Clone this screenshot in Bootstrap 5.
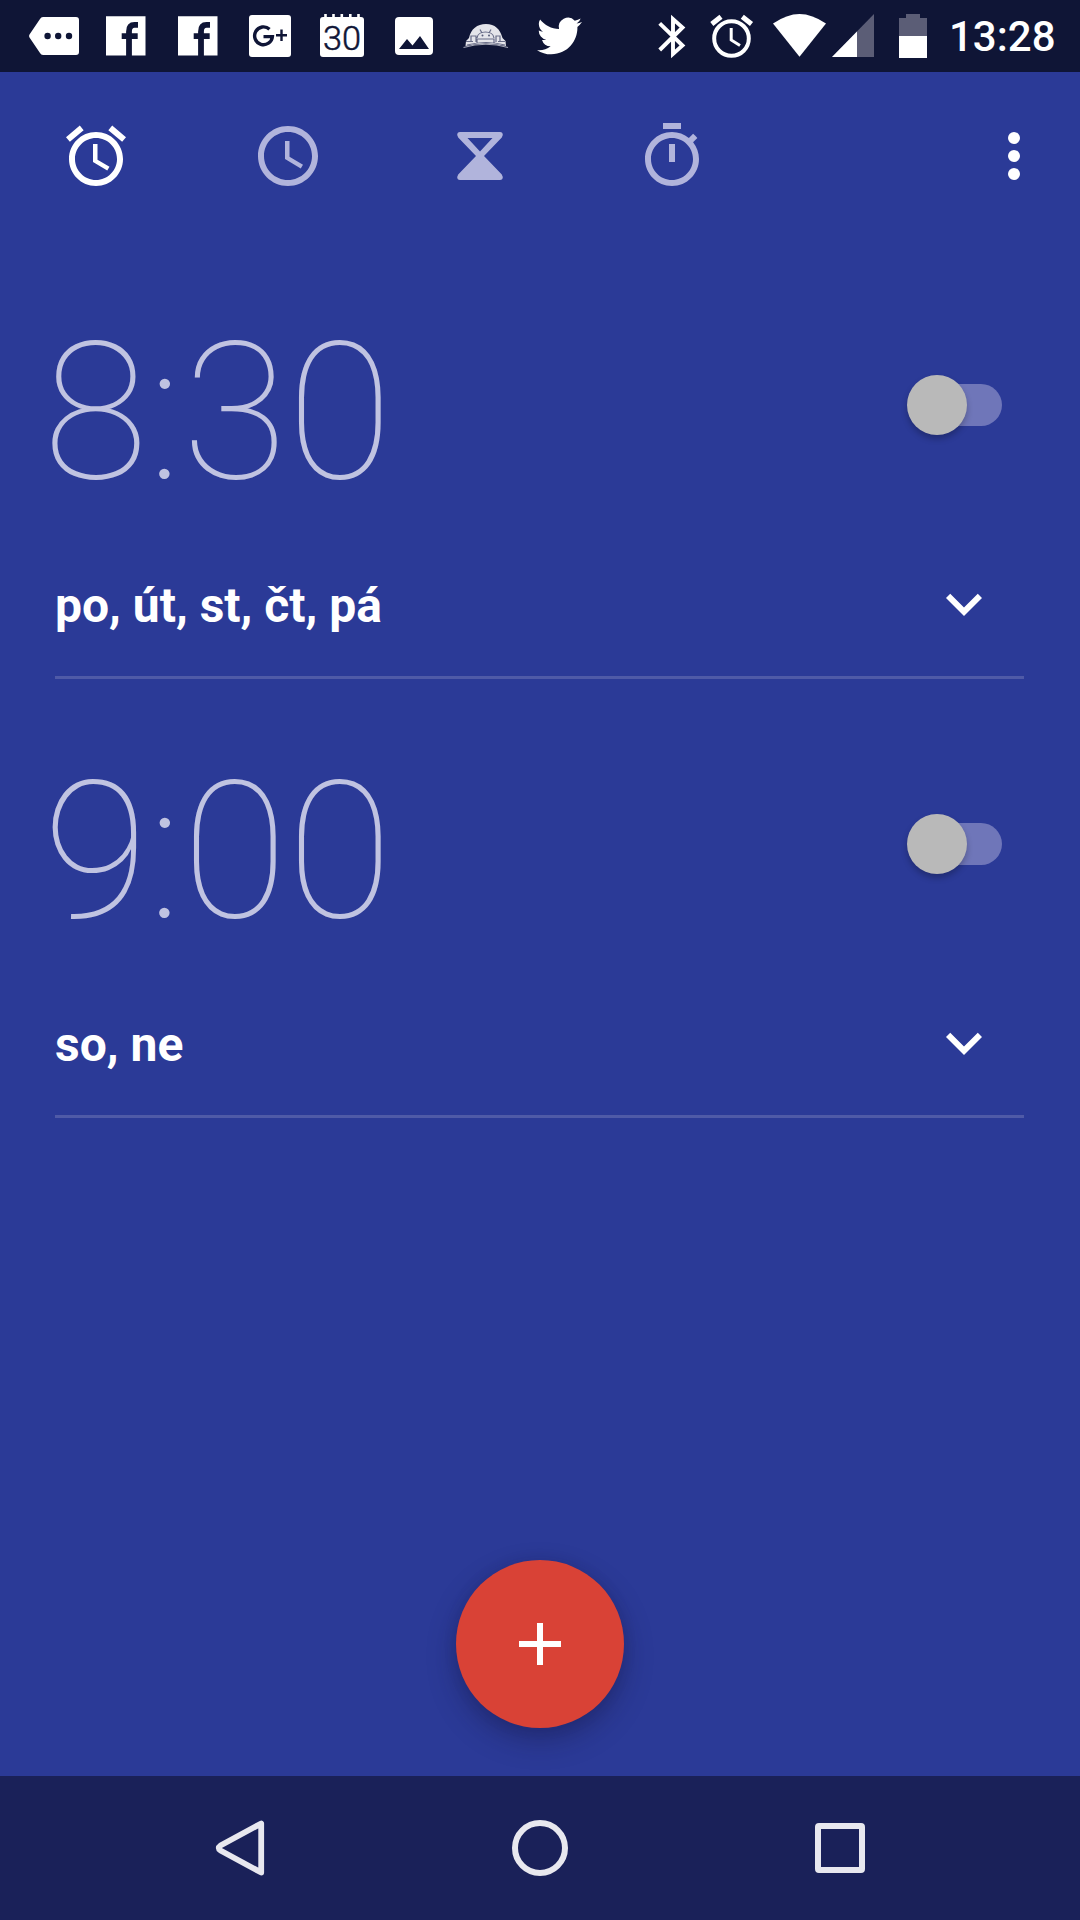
<!DOCTYPE html>
<html lang="cs">
<head>
<meta charset="utf-8">
<meta name="viewport" content="width=device-width, initial-scale=1">
<title>Hodiny</title>
<link href="https://cdn.jsdelivr.net/npm/bootstrap@5.3.0/dist/css/bootstrap.min.css" rel="stylesheet">
<style>
body{font-family:Roboto,"Noto Sans",sans-serif;background:#2b3a97;width:1080px;height:1920px;overflow:hidden}
svg{display:block;flex:none}
.statusbar{height:72px;background:#0f1536;padding-left:18px}
.slot svg{width:72px;height:72px}
.sysclock{font-size:42px;font-weight:500;line-height:72px;width:132px;padding-left:1px;padding-top:1px}
.tabs{height:168px;padding-right:30px}
.tab-item{width:192px;height:168px;color:#b1b4dc}
.tab-item.active{color:#fff}
.ico{width:72px;height:72px}
.alarm{height:439px;margin:0 56px 0 55px;border-bottom:3px solid #4f5aa7;padding-top:57px}
.alarm-time{font-size:192px;font-weight:100;line-height:225px;height:225px;color:#c0c3e1;margin:3px 0 0 -12px}
.alarm-top{height:225px}
.toggle{width:96px;height:61px;margin:77px 22px 0 0;padding:10px 0 0 12px}
.track{height:42px;border-radius:21px;background:#6f76b9}
.thumb{width:60px;height:60px;background:#b9b9b9;left:.5px;top:.5px;box-shadow:0 4px 6px rgba(0,0,0,.24)}
.days{font-size:48px;font-weight:700;line-height:72px;padding-top:4px}
.alarm-bottom{margin-top:46px;padding-right:24px;height:72px}
.fab{width:168px;height:168px;background:#d94236;box-shadow:0 12px 28px rgba(20,20,60,.38),0 0 14px rgba(20,20,60,.1);margin-bottom:48px}
.navkeys{height:144px;background:#1a2159}
.key{width:300px}
</style>
</head>
<body class="d-flex flex-column text-white">
<header class="statusbar d-flex flex-none justify-content-between">
  <div class="slot d-flex">
    <svg viewBox="18 0 72 72"><path fill="#fff" d="M43 17H76Q79 17 79 20V52Q79 55 76 55H43Q41 55 40 53L29.500 37.500Q28.500 36 29.500 34.500L40 19Q41 17 43 17Z"/><g fill="#0f1536"><circle cx="47.600" cy="36" r="3.200"/><circle cx="58.200" cy="36" r="3.200"/><circle cx="69" cy="36" r="3.200"/></g></svg>
    <svg viewBox="90 0 72 72"><path fill="#fff" d="M106 16.300h39.500v39.200H106z"/><path fill="none" stroke="#0f1536" stroke-width="5.800" d="M129 56V31.500Q129 24.900 134.500 24.900H138M121.700 36.200H137.700"/></svg>
    <svg viewBox="90 0 72 72"><path fill="#fff" d="M106 16.300h39.500v39.200H106z"/><path fill="none" stroke="#0f1536" stroke-width="5.800" d="M129 56V31.500Q129 24.900 134.500 24.900H138M121.700 36.200H137.700"/></svg>
    <svg viewBox="234 0 72 72"><rect x="249" y="15" width="42" height="42" rx="3" fill="#fff"/><path fill="none" stroke="#0f1536" stroke-width="3.400" d="M269.500 29.200A8.900 8.900 0 1 0 272.400 36.600H263.500"/><path fill="none" stroke="#0f1536" stroke-width="2.400" d="M276 35.200h11M281.500 29.500V41"/></svg>
    <svg viewBox="306 0 72 72"><path fill="#fff" d="M320 20q0-3 3-3h38q3 0 3 3v34q0 3-3 3h-38q-3 0-3-3z"/><path stroke="#fff" stroke-width="2.600" d="M325.500 14v5M333.500 14v5M341.800 14v5M350.300 14v5M358.500 14v5"/><text x="323" y="50" fill="#0f1536" stroke="#0f1536" stroke-width=".5" font-family="Roboto" font-size="34" font-weight="300" textLength="38" lengthAdjust="spacingAndGlyphs">30</text></svg>
    <svg viewBox="378 0 72 72"><rect x="395" y="17" width="38" height="38" rx="4" fill="#fff"/><path fill="#0f1536" d="M399 49L407 39L412.500 45.500L420 36L429 49Z"/></svg>
    <svg viewBox="450 0 72 72"><path fill="#e4e4ea" d="M465.500 46L466 41L469 38C471 29 477 24 486 24S500 29 502.500 38L505.500 41L506 46Q486 41 465.500 46Z"/><path fill="none" stroke="#a5a7b8" stroke-width="1.200" d="M463.500 47.500Q486 41 508 47.500"/><g fill="none" stroke="#686c88" stroke-width="1.200"><path d="M467 45Q486 40 505 45M477 43V39H494V43M477 38C478 30 493 30 494 38M480 29.500L482 33M491 29.500L489 33M471 42V36H476V42M496 42V36H500V42M466 41.500H473M498 41.500H505"/></g><circle cx="482.500" cy="35.500" r="1" fill="#555978"/><circle cx="489" cy="35.500" r="1" fill="#555978"/></svg>
    <svg viewBox="522 0 72 72"><path fill="#fff" transform="translate(537,13.500) scale(1.875)" d="M23.953 4.570a10 10 0 01-2.825.775 4.958 4.958 0 002.163-2.723c-.951.555-2.005.959-3.127 1.184a4.920 4.920 0 00-8.384 4.482C7.690 8.095 4.067 6.130 1.640 3.162a4.822 4.822 0 00-.666 2.475c0 1.710.870 3.213 2.188 4.096a4.904 4.904 0 01-2.228-.616v.060a4.923 4.923 0 003.946 4.827 4.996 4.996 0 01-2.212.085 4.936 4.936 0 004.604 3.417 9.867 9.867 0 01-6.102 2.105c-.390 0-.779-.023-1.170-.067a13.995 13.995 0 007.557 2.209c9.053 0 13.998-7.496 13.998-13.985 0-.210 0-.420-.015-.630A9.935 9.935 0 0024 4.590z"/></svg>
  </div>
  <div class="d-flex">
    <svg width="300" height="72" viewBox="648 0 300 72" fill="#fff"><path fill="none" stroke="#fff" stroke-width="3.900" d="M659.700 23.300L682.500 45.500L673 54V19L682.500 27.500L659.700 50"/>
      <circle cx="731.500" cy="38.500" r="17.300" fill="none" stroke="#fff" stroke-width="4"/><path fill="none" stroke="#fff" stroke-width="3" d="M731.200 28V40L740 45.500"/><path stroke="#fff" stroke-width="5" d="M711.800 24L721 16.800M751.500 24L742.300 16.800"/>
      <path d="M773 23.500Q787 14 799.500 14T826 23.500L799.500 56.800Z"/>
      <path fill="#5b5d76" d="M874 14V57H832Z"/><path d="M857 31.500V57H832Z"/>
      <path fill="#5b5d76" d="M899 18h7v-4h14v4h7v19h-28z"/><path d="M899 36h28v22h-28z"/></svg>
    <div class="sysclock">13:28</div>
  </div>
</header>

<nav class="tabs d-flex align-items-center" aria-label="Režim">
  <div class="tab-item active d-flex align-items-center justify-content-center"><svg class="ico" viewBox="0 0 24 24" fill="currentColor"><path d="M22 5.720l-4.600-3.860-1.290 1.530 4.600 3.860L22 5.720zM7.880 3.390L6.600 1.860 2 5.710l1.290 1.530 4.590-3.850zM12.500 8H11v6l4.750 2.850.750-1.230-4-2.370V8zM12 4c-4.970 0-9 4.030-9 9s4.020 9 9 9c4.970 0 9-4.030 9-9s-4.030-9-9-9zm0 16c-3.870 0-7-3.130-7-7s3.130-7 7-7 7 3.130 7 7-3.130 7-7 7z"/></svg></div>
  <div class="tab-item d-flex align-items-center justify-content-center"><svg class="ico" viewBox="0 0 24 24" fill="currentColor"><path d="M11.990 2C6.470 2 2 6.480 2 12s4.470 10 9.990 10C17.520 22 22 17.520 22 12S17.520 2 11.990 2zM12 20c-4.420 0-8-3.580-8-8s3.580-8 8-8 8 3.580 8 8-3.580 8-8 8zm.5-13H11v6l5.250 3.150.750-1.230-4.500-2.670z"/></svg></div>
  <div class="tab-item d-flex align-items-center justify-content-center"><svg class="ico" viewBox="0 0 72 72" fill="currentColor"><path fill-rule="evenodd" d="M16 12H56Q58.800 12 58.800 15L57.800 17.500L40 36L57.800 54.500L58.800 57Q58.800 60 56 60H16Q13.200 60 13.200 57L14.200 54.500L32 36L14.200 17.500L13.200 15Q13.200 12 16 12ZM23.500 18L36 31.500L48.500 18Z"/></svg></div>
  <div class="tab-item d-flex align-items-center justify-content-center"><svg class="ico" viewBox="0 0 24 24" fill="currentColor"><path d="M15 1H9v2h6V1zm-4 13h2V8h-2v6zm8.030-6.610l1.420-1.420c-.430-.510-.900-.990-1.410-1.410l-1.420 1.420C16.070 4.740 14.120 4 12 4c-4.970 0-9 4.030-9 9s4.020 9 9 9 9-4.030 9-9c0-2.120-.740-4.070-1.970-5.610zM12 20c-3.870 0-7-3.130-7-7s3.130-7 7-7 7 3.130 7 7-3.130 7-7 7z"/></svg></div>
  <svg class="ico ms-auto" viewBox="0 0 24 24" fill="#fff"><circle cx="12" cy="6" r="2"/><circle cx="12" cy="12" r="2"/><circle cx="12" cy="18" r="2"/></svg>
</nav>

<main class="flex-grow-1 d-flex flex-column">
  <section class="alarm">
    <div class="alarm-top d-flex justify-content-between">
      <div class="alarm-time">8:30</div>
      <div class="toggle position-relative"><div class="track"></div><div class="thumb rounded-circle position-absolute"></div></div>
    </div>
    <div class="alarm-bottom d-flex justify-content-between align-items-center">
      <div class="days">po, út, st, čt, pá</div>
      <svg class="ico" viewBox="0 0 24 24" fill="#fff"><path d="M16.590 8.590L12 13.170 7.410 8.590 6 10l6 6 6-6z"/></svg>
    </div>
  </section>
  <section class="alarm">
    <div class="alarm-top d-flex justify-content-between">
      <div class="alarm-time">9:00</div>
      <div class="toggle position-relative"><div class="track"></div><div class="thumb rounded-circle position-absolute"></div></div>
    </div>
    <div class="alarm-bottom d-flex justify-content-between align-items-center">
      <div class="days">so, ne</div>
      <svg class="ico" viewBox="0 0 24 24" fill="#fff"><path d="M16.590 8.590L12 13.170 7.410 8.590 6 10l6 6 6-6z"/></svg>
    </div>
  </section>
  <div class="fab rounded-circle mt-auto mx-auto d-flex align-items-center justify-content-center"><svg class="ico" viewBox="0 0 24 24" fill="#fff"><path d="M19 13h-6v6h-2v-6H5v-2h6V5h2v6h6v2z"/></svg></div>
</main>

<footer class="navkeys d-flex justify-content-center align-items-center">
  <div class="key d-flex justify-content-center"><svg class="ico" viewBox="0 0 72 72"><path fill="none" stroke="#e8e8ef" stroke-width="5.800" stroke-linejoin="round" d="M57.200 11.500V60.500L16.500 38.500Q13 36 16.500 33.500Z"/></svg></div>
  <div class="key d-flex justify-content-center"><svg class="ico" viewBox="0 0 72 72"><circle cx="36" cy="36" r="25" fill="none" stroke="#e8e8ef" stroke-width="6"/></svg></div>
  <div class="key d-flex justify-content-center"><svg class="ico" viewBox="0 0 72 72"><path fill="#e8e8ef" fill-rule="evenodd" d="M15 11H57Q61 11 61 15V57Q61 61 57 61H15Q11 61 11 57V15Q11 11 15 11ZM17 17V55H55V17Z"/></svg></div>
</footer>
<script src="https://cdn.jsdelivr.net/npm/bootstrap@5.3.0/dist/js/bootstrap.bundle.min.js"></script>
</body>
</html>
